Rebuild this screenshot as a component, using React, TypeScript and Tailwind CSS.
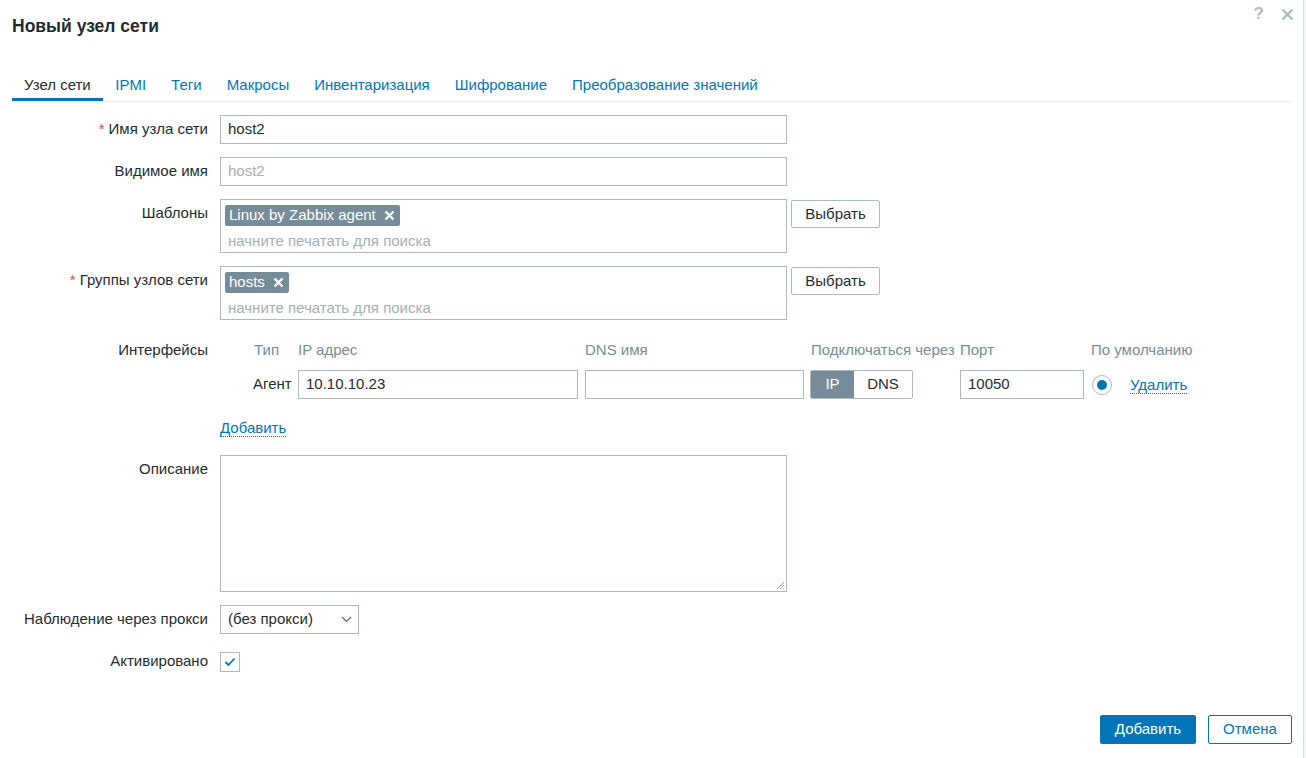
import React from "react";

const font = { fontFamily: "'Liberation Sans', Arial, sans-serif" };

function Label({ children, required }: { children: React.ReactNode; required?: boolean }) {
  return (
    <div className="h-[29px] flex items-center justify-end text-right text-[#1f2c33] whitespace-nowrap">
      {required && <span className="text-[#e54545] mr-[4px]">*</span>}
      {children}
    </div>
  );
}

function Tag({ text }: { text: string }) {
  return (
    <span className="inline-flex items-center h-[21px] bg-[#768d99] text-white rounded-[2px] pl-[4px] pr-[5px]">
      <span>{text}</span>
      <svg className="ml-[8px]" width="11" height="11" viewBox="0 0 11 11">
        <path d="M1.5 1.5 L9.5 9.5 M9.5 1.5 L1.5 9.5" stroke="white" strokeWidth="2.4" strokeLinecap="butt" />
      </svg>
    </span>
  );
}

function MultiSelect({ tag }: { tag: string }) {
  return (
    <div className="flex items-start">
      <div className="w-[567px] h-[54px] border border-[#acbbc2] bg-white px-[4px] pt-[4px]">
        <Tag text={tag} />
        <div className="text-[#a3b0b7] pl-[3px] mt-[4px] leading-[20px]">начните печатать для поиска</div>
      </div>
      <button className="ml-[4px] mt-[1px] w-[89px] h-[28px] border border-[#acbbc2] rounded-[2px] bg-white text-[#1f2c33]">
        Выбрать
      </button>
    </div>
  );
}

export default function App() {
  return (
    <div className="w-[1306px] h-[758px] bg-[#f4f6f7] flex text-[15px]" style={font}>
      <div className="w-[1304px] h-[758px] bg-white border-r border-[#d5dadd] flex flex-col relative">
        {/* header */}
        <div className="h-[48px] flex items-center px-[12px] pt-[4px]">
          <div className="text-[17.5px] font-bold text-[#1f2c33]">Новый узел сети</div>
        </div>
        <div className="absolute top-[4px] right-[9px] flex items-center gap-[17px] text-[#acbbc2]">
          <span className="text-[17px] font-bold leading-[20px]">?</span>
          <svg width="13" height="13" viewBox="0 0 13 13">
            <path d="M1.5 1.5 L11.5 11.5 M11.5 1.5 L1.5 11.5" stroke="#acbbc2" strokeWidth="2.4" />
          </svg>
        </div>

        {/* tabs */}
        <div className="mt-[17px] mx-[12px] flex border-b border-[#ebeef0]">
          {[
            "Узел сети",
            "IPMI",
            "Теги",
            "Макросы",
            "Инвентаризация",
            "Шифрование",
            "Преобразование значений",
          ].map((t, i) => (
            <div
              key={t}
              className={
                i === 0
                  ? "px-[12px] pt-[11px] pb-[5px] leading-[17px] border-b-[3px] border-[#0275b8] text-[#1f2c33]"
                  : "px-[12.5px] pt-[11px] pb-[5px] leading-[17px] border-b-[3px] border-transparent text-[#0275b8]"
              }
            >
              {t}
            </div>
          ))}
        </div>

        {/* form */}
        <div className="mt-[13px] px-[12px] grid grid-cols-[196px_1fr] gap-x-[12px] gap-y-[13px] text-[#1f2c33]">
          <Label required>Имя узла сети</Label>
          <div className="w-[567px] h-[29px] border border-[#acbbc2] flex items-center px-[7px]">host2</div>

          <Label>Видимое имя</Label>
          <div className="w-[567px] h-[29px] border border-[#acbbc2] flex items-center px-[7px] text-[#a3b0b7]">host2</div>

          <Label>Шаблоны</Label>
          <MultiSelect tag="Linux by Zabbix agent" />

          <Label required>Группы узлов сети</Label>
          <MultiSelect tag="hosts" />

          <div className="h-[34px] flex items-center justify-end">Интерфейсы</div>
          <div className="flex flex-col">
            <div className="h-[34px] flex items-center pl-[34px] text-[#768d99]">
              <div className="w-[44px]">Тип</div>
              <div className="w-[287px]">IP адрес</div>
              <div className="w-[226px]">DNS имя</div>
              <div className="w-[149px] whitespace-nowrap">Подключаться через</div>
              <div className="w-[131px]">Порт</div>
              <div>По умолчанию</div>
            </div>
            <div className="mt-[3px] h-[29px] flex items-center pl-[33px]">
              <div className="w-[45px]">Агент</div>
              <div className="w-[287px]">
                <div className="w-[280px] h-[29px] border border-[#acbbc2] flex items-center px-[7px]">10.10.10.23</div>
              </div>
              <div className="w-[225px]">
                <div className="w-[219px] h-[29px] border border-[#acbbc2]"></div>
              </div>
              <div className="w-[150px]">
                <div className="w-[103px] h-[29px] border border-[#acbbc2] rounded-[2px] flex overflow-hidden">
                  <div className="w-[43px] bg-[#768d99] text-white flex items-center justify-center">IP</div>
                  <div className="flex-1 flex items-center justify-center">DNS</div>
                </div>
              </div>
              <div className="w-[131px]">
                <div className="w-[124px] h-[29px] border border-[#acbbc2] flex items-center px-[7px]">10050</div>
              </div>
              <div className="flex items-center">
                <div className="ml-[1px] w-[20px] h-[20px] rounded-full border border-[#acbbc2] flex items-center justify-center">
                  <div className="w-[10px] h-[10px] rounded-full bg-[#0275b8]"></div>
                </div>
                <span className="ml-[18px] text-[#0275b8] border-b border-dotted border-[#0275b8] leading-[17px]">Удалить</span>
              </div>
            </div>
            <div className="mt-[14px] h-[29px] flex items-center">
              <span className="text-[#0275b8] border-b border-dotted border-[#0275b8] leading-[17px]">Добавить</span>
            </div>
          </div>

          <Label>Описание</Label>
          <div className="w-[567px] h-[137px] border border-[#acbbc2] relative">
            <svg className="absolute right-[1px] bottom-[1px]" width="9" height="9" viewBox="0 0 9 9">
              <path d="M8 1 L1 8 M8 4 L4 8 M8 7 L7 8" stroke="#9aa5ab" strokeWidth="1" />
            </svg>
          </div>

          <Label>Наблюдение через прокси</Label>
          <div className="w-[139px] h-[29px] border border-[#acbbc2] flex items-center justify-between pl-[7px] pr-[6px]">
            <span>(без прокси)</span>
            <svg width="11" height="7" viewBox="0 0 11 7">
              <path d="M1 1 L5.5 5.5 L10 1" stroke="#5b6b73" strokeWidth="1.2" fill="none" />
            </svg>
          </div>

          <Label>Активировано</Label>
          <div className="h-[29px] flex items-center">
            <div className="w-[20px] h-[20px] border border-[#acbbc2] flex items-center justify-center">
              <svg width="12" height="10" viewBox="0 0 12 10">
                <path d="M1.5 5 L4.5 8 L10.5 1.5" stroke="#0275b8" strokeWidth="1.8" fill="none" />
              </svg>
            </div>
          </div>
        </div>

        {/* footer */}
        <div className="mt-auto mb-[14px] px-[11px] flex justify-end gap-[12px]">
          <button className="w-[96px] h-[29px] bg-[#0275b8] text-white rounded-[2px]">Добавить</button>
          <button className="w-[84px] h-[29px] border border-[#0275b8] text-[#0275b8] rounded-[2px] bg-white">Отмена</button>
        </div>
      </div>
    </div>
  );
}
